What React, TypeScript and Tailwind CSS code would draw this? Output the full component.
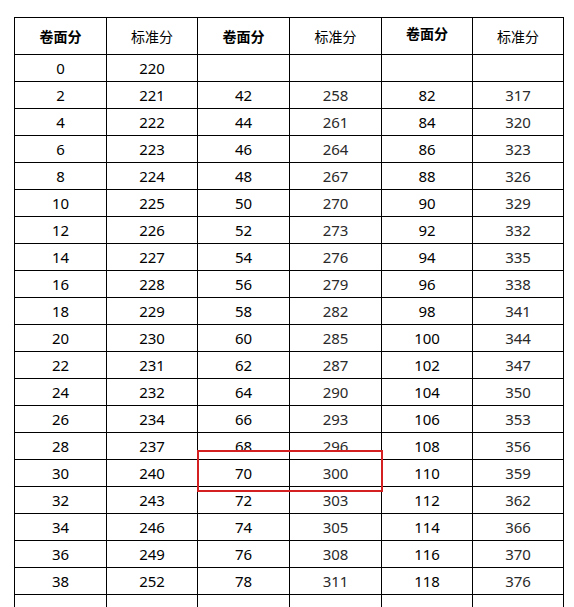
import React from "react";

const col1 = Array.from({ length: 20 }, (_, i) => String(i * 2));
const col2 = ["220","221","222","223","224","225","226","227","228","229","230","231","232","234","237","240","243","246","249","252"];
const col3 = ["", ...Array.from({ length: 19 }, (_, i) => String(42 + i * 2))];
const col4 = ["","258","261","264","267","270","273","276","279","282","285","287","290","293","296","300","303","305","308","311"];
const col5 = ["", ...Array.from({ length: 19 }, (_, i) => String(82 + i * 2))];
const col6 = ["","317","320","323","326","329","332","335","338","341","344","347","350","353","356","359","362","366","370","376"];

const widths = ["w-[92px]", "w-[91px]", "w-[92px]", "w-[92px]", "w-[91px]", "w-[91px]"];

export default function App() {
  const rows = col1.map((_, i) => [col1[i], col2[i], col3[i], col4[i], col5[i], col6[i]]);
  return (
    <div
      className="relative h-[607px] w-[574px] overflow-hidden bg-white text-black"
      style={{ fontFamily: '"Noto Sans", "Noto Sans CJK SC", sans-serif' }}
    >
      <div className="ml-[14px] mt-[17px] flex w-max flex-col border-l border-t border-black">
        <div className="flex">
          {["卷面分", "标准分", "卷面分", "标准分", "卷面分", "标准分"].map((h, j) => (
            <div
              key={j}
              className={`${widths[j]} flex h-[37px] justify-center border-b border-r border-black text-[14px] ${
                j % 2 === 0 ? "font-bold" : "font-normal"
              } ${j === 4 ? "items-start pt-[5px]" : "items-center"}`}
              style={{ fontFamily: '"Noto Sans CJK SC", sans-serif' }}
            >
              {h}
            </div>
          ))}
        </div>
        {rows.map((r, i) => (
          <div key={i} className="flex">
            {r.map((v, j) => (
              <div
                key={j}
                className={`${widths[j]} flex h-[27px] items-center justify-center border-b border-r border-black text-[15px] leading-none ${
                  j % 2 === 1 && j > 1 ? "text-[#2a2a2a]" : "text-black"
                }`}
              >
                {v}
              </div>
            ))}
          </div>
        ))}
        <div className="flex">
          {widths.map((w, j) => (
            <div key={j} className={`${w} h-[27px] border-r border-black`} />
          ))}
        </div>
      </div>
      <div className="absolute left-[197px] top-[450px] h-[42px] w-[186px] border-2 border-[#d42020]" />
    </div>
  );
}
